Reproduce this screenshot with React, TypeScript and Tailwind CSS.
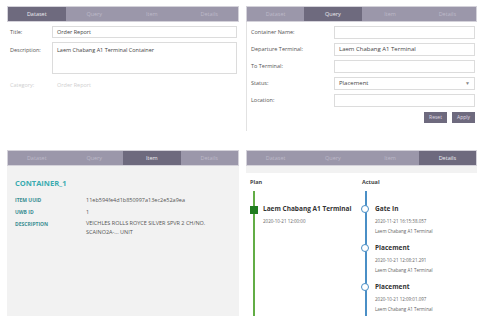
const TABS = ['Dataset', 'Query', 'Item', 'Details']

function TabBar({ active }: { active: string }) {
  return (
    <div className="flex h-[16px] border border-[#d4d2da]">
      {TABS.map((t) => (
        <div
          key={t}
          className={`flex flex-1 items-center justify-center text-[5.5px] ${
            t === active ? 'bg-[#6e6a7e] text-[#ecebf0]' : 'bg-[#9b97aa] text-[#bdb9c9]'
          }`}
        >
          {t}
        </div>
      ))}
    </div>
  )
}

function DatasetPanel() {
  return (
    <div className="flex flex-col">
      <TabBar active="Dataset" />
      <div className="flex flex-col gap-[4px] pl-[3px] pr-[2px] pt-[4px] text-[5.5px] text-[#555]">
        <div className="flex items-center">
          <div className="w-[42px]">Title:</div>
          <div className="flex h-[12px] flex-1 items-center border border-[#dcdcdc] px-[4px] text-[#444]">
            Order Report
          </div>
        </div>
        <div className="flex items-start">
          <div className="w-[42px] pt-[4px]">Description:</div>
          <div className="h-[32px] flex-1 border border-[#dcdcdc] px-[4px] pt-[3px] text-[#444]">
            Laem Chabang A1 Terminal Container
          </div>
        </div>
        <div className="mt-[3px] flex items-center text-[#cfcfcf]">
          <div className="w-[42px]">Category:</div>
          <div className="pl-[5px]">Order Report</div>
        </div>
      </div>
    </div>
  )
}

function QueryPanel() {
  const rows = [
    { label: 'Container Name:', value: '' },
    { label: 'Departure Terminal:', value: 'Laem Chabang A1 Terminal' },
    { label: 'To Terminal:', value: '' },
    { label: 'Status:', value: 'Placement', select: true },
    { label: 'Location:', value: '' },
  ]
  return (
    <div className="flex flex-col">
      <TabBar active="Query" />
      <div className="flex flex-col border-l border-[#e2e2e2] pb-[8px] pl-[4px] pr-[2px] pt-[4px] text-[5.5px] text-[#555]">
        <div className="flex flex-col gap-[4px]">
          {rows.map((r) => (
            <div key={r.label} className="flex items-center">
              <div className="w-[83px]">{r.label}</div>
              <div className="flex h-[13px] flex-1 items-center justify-between border border-[#dcdcdc] px-[4px] text-[6px] text-[#444]">
                <span>{r.value}</span>
                {r.select && <span className="text-[5px] text-[#888]">▼</span>}
              </div>
            </div>
          ))}
        </div>
        <div className="mt-[5px] flex justify-end gap-[5px]">
          <div className="flex h-[11px] w-[23px] items-center justify-center bg-[#6e6a7e] text-[5px] text-[#e0dee6]">
            Reset
          </div>
          <div className="flex h-[11px] w-[23px] items-center justify-center bg-[#6e6a7e] text-[5px] text-[#e0dee6]">
            Apply
          </div>
        </div>
      </div>
    </div>
  )
}

function ItemPanel() {
  return (
    <div className="flex h-full flex-col">
      <TabBar active="Item" />
      <div className="flex-1 bg-[#f2f2f2] pl-[8px] pt-[11px]">
        <div className="h-[12px] text-[7.5px] font-bold leading-[12px] text-[#3aabb0]">
          CONTAINER_1
        </div>
        <div className="mt-[6px] grid grid-cols-[71px_1fr] gap-y-[2px] text-[5px] leading-[10px]">
          <div className="font-bold text-[#3b8e93]">ITEM UUID</div>
          <div className="text-[5.5px] text-[#555]">11eb594fe4d1b850997a13ec2e52a9ea</div>
          <div className="font-bold text-[#3b8e93]">UWB ID</div>
          <div className="text-[5.5px] text-[#555]">1</div>
          <div className="font-bold text-[#3b8e93]">DESCRIPTION</div>
          <div className="text-[5.5px] leading-[9px] text-[#555]">
            VEICHLES ROLLS ROYCE SILVER SPVR 2 CH/NO.
            <br />
            SCAINO2A-... UNIT
          </div>
        </div>
      </div>
    </div>
  )
}

const actual = [
  { title: 'Gate In', date: '2020-11-21 16:15:38.057' },
  { title: 'Placement', date: '2020-10-21 12:08:21.291' },
  { title: 'Placement', date: '2020-10-21 12:09:01.097' },
]

function DetailsPanel() {
  return (
    <div className="flex h-full flex-col">
      <TabBar active="Details" />
      <div className="h-[7px] bg-[#f2f2f2]" />
      <div className="flex flex-1 pl-[4px] pt-[4px]">
        <div className="flex w-[112px] flex-col">
          <div className="h-[10px] text-[5.5px] font-bold leading-[10px] text-[#444]">Plan</div>
          <div className="relative ml-[3px] mt-[4px] flex-1 border-l-2 border-[#62ad45] pl-[8px] pt-[13px]">
            <div className="absolute left-[-5px] top-[15px] h-[8px] w-[8px] bg-[#1f7d1f]" />
            <div className="h-[10px] text-[6.5px] font-bold leading-[10px] text-[#333]">
              Laem Chabang A1 Terminal
            </div>
            <div className="mt-[2px] h-[10px] text-[4.5px] leading-[10px] text-[#666]">
              2020-10-21 12:00:00
            </div>
          </div>
        </div>
        <div className="flex flex-1 flex-col">
          <div className="h-[10px] text-[5.5px] font-bold leading-[10px] text-[#444]">Actual</div>
          <div className="ml-[3px] mt-[4px] flex flex-1 flex-col gap-[7px] border-l-2 border-[#4a8fc6] pl-[8px] pt-[13px]">
            {actual.map((a, i) => (
              <div key={i} className="relative">
                <div className="absolute left-[-14px] top-[1px] h-[8px] w-[8px] rounded-full border-[1.5px] border-[#4a8fc6] bg-white" />
                <div className="h-[10px] text-[6.5px] font-bold leading-[10px] text-[#333]">{a.title}</div>
                <div className="mt-[2px] h-[10px] text-[4.5px] leading-[10px] text-[#666]">{a.date}</div>
                <div className="h-[10px] text-[4.5px] leading-[10px] text-[#666]">Laem Chabang A1 Terminal</div>
              </div>
            ))}
          </div>
        </div>
      </div>
    </div>
  )
}

export default function App() {
  return (
    <div
      className="h-[325px] w-[486px] bg-white pl-[7px] pt-[6px]"
      style={{ fontFamily: '"Open Sans", "Noto Sans", sans-serif' }}
    >
      <div className="grid grid-cols-[232px_231px] grid-rows-[137px_166px] gap-[7px]">
        <DatasetPanel />
        <QueryPanel />
        <ItemPanel />
        <DetailsPanel />
      </div>
    </div>
  )
}
